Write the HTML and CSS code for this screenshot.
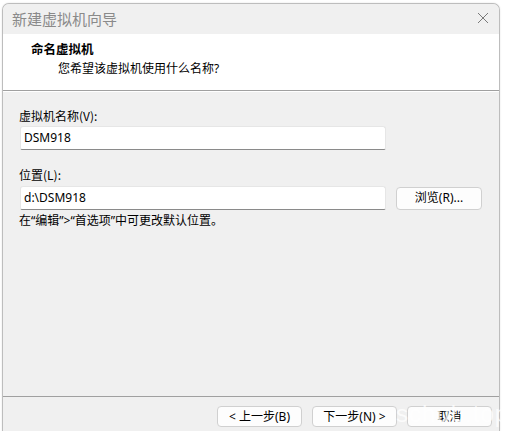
FILE: index.html
```html
<!DOCTYPE html>
<html lang="zh-CN">
<head>
<meta charset="utf-8">
<title>新建虚拟机向导</title>
<link rel="stylesheet" href="styles.css">
</head>
<body>
<div class="window">
  <div class="titlebar">
    <span class="title">新建虚拟机向导</span>
    <svg class="close" width="12" height="12" viewBox="0 0 12 12"><path d="M1 1L11 11M11 1L1 11" stroke="#7a7a7a" stroke-width="1" fill="none"/></svg>
  </div>
  <div class="header">
    <div class="heading">命名虚拟机</div>
    <div class="subheading">您希望该虚拟机使用什么名称?</div>
  </div>
  <div class="content">
    <div class="label">虚拟机名称(V):</div>
    <div class="row">
      <div class="input">DSM918</div>
    </div>
    <div class="label label2">位置(L):</div>
    <div class="row row2">
      <div class="input">d:\DSM918</div>
      <div class="btn browse">浏览(R)...</div>
    </div>
    <div class="note">在“编辑”&gt;“首选项”中可更改默认位置。</div>
  </div>
  <div class="footer">
    <div class="btn">&lt; 上一步(B)</div>
    <div class="btn">下一步(N) &gt;</div>
    <div class="btn">取消</div>
  </div>
</div>
<div class="watermark">schub.top</div>
</body>
</html>
```
FILE: styles.css
```css
html, body {
  margin: 0;
  padding: 0;
}
body {
  width: 509px;
  height: 431px;
  overflow: hidden;
  background: #ffffff;
  font-family: "Noto Sans", "Noto Sans CJK SC", sans-serif;
  font-size: 12px;
  color: #000;
  position: relative;
}
.window {
  box-sizing: border-box;
  margin: 3px 0 0 2px;
  width: 498px;
  height: 428px;
  border: 1px solid #bdbdbd;
  border-bottom: none;
  border-radius: 7px 7px 0 0;
  background: #f0f0f0;
  box-shadow: 0 0 2px rgba(0,0,0,0.12);
  overflow: hidden;
}
.titlebar {
  height: 30px;
  display: flex;
  align-items: center;
  justify-content: space-between;
  padding: 0 10px 0 9px;
  background: #f0f0f0;
}
.title {
  font-size: 15px;
  line-height: 20px;
  color: #8a8a8a;
}
.close {
  display: block;
  margin-top: -2px;
}
.header {
  box-sizing: border-box;
  height: 57px;
  background: #ffffff;
  border-bottom: 1px solid #a0a0a0;
  padding: 8px 0 0 28px;
  box-shadow: 0 1px 0 #ffffff;
}
.heading {
  font-weight: bold;
  font-size: 12.5px;
  line-height: 16px;
}
.subheading {
  margin: 3px 0 0 27px;
  line-height: 16px;
}
.content {
  box-sizing: border-box;
  height: 305px;
  padding: 17px 0 0 16px;
}
.label {
  line-height: 16px;
  font-family: "Noto Sans CJK SC", "Noto Sans", sans-serif;
}
.label2 {
  margin-top: 17px;
}
.row {
  display: flex;
  align-items: center;
  margin-top: 2px;
}
.row2 {
  margin-top: 3px;
}
.input {
  box-sizing: border-box;
  margin-left: 1px;
  width: 366px;
  height: 24px;
  background: #ffffff;
  border: 1px solid #e6e6e6;
  border-bottom: 1px solid #8a8a8a;
  border-radius: 3px 3px 2px 2px;
  padding: 0 0 0 3px;
  line-height: 22px;
}
.btn {
  box-sizing: border-box;
  width: 85px;
  height: 21px;
  background: #fdfdfd;
  border: 1px solid #d0d0d0;
  border-radius: 4px;
  display: flex;
  align-items: center;
  justify-content: center;
  line-height: 16px;
}
.browse {
  margin-left: 10px;
  height: 23px;
  width: 86px;
}
.note {
  margin-top: 3px;
  line-height: 16px;
}
.footer {
  border-top: 1px solid #a0a0a0;
  display: flex;
  justify-content: flex-end;
  gap: 10px;
  padding: 9px 7px 0 0;
}
.watermark {
  position: absolute;
  left: 396px;
  top: 400px;
  font-family: "Liberation Sans", sans-serif;
  font-size: 24px;
  line-height: 28px;
  color: rgba(255,255,255,0.75);
  letter-spacing: 1px;
}
```
